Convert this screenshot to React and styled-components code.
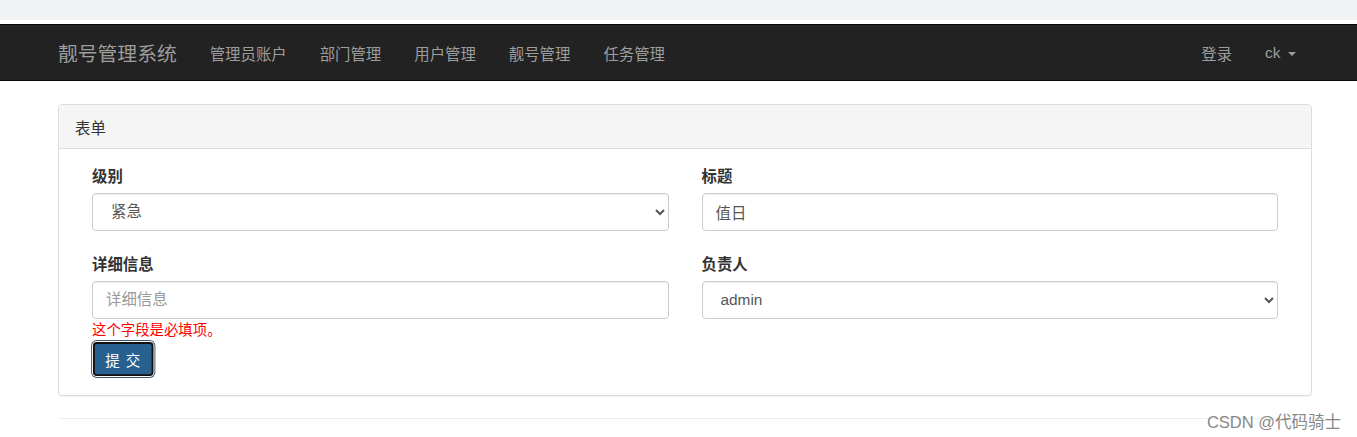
import React from 'react';
import styled, { createGlobalStyle } from 'styled-components';

const GlobalStyle = createGlobalStyle`
  body {
    margin: 0;
    padding: 0;
    font-family: "Liberation Sans", "Noto Sans CJK SC", sans-serif;
    font-size: 15.4px;
    color: #333;
    background: #fff;
  }
  * { box-sizing: border-box; }
`;

const TopStrip = styled.div`
  height: 20px;
  background: #f1f2f4;
  margin-bottom: 4px;
`;

const Navbar = styled.nav`
  height: 57px;
  background: #222;
  border-top: 1px solid #080808;
  border-bottom: 1px solid #080808;
`;

const Container = styled.div`
  padding: 0 45px 0 58px;
  height: 100%;
  display: flex;
  align-items: center;
`;

const Brand = styled.a`
  color: #9d9d9d;
  font-size: 19.8px;
  padding-right: 16.5px;
  text-decoration: none;
`;

const NavList = styled.div`
  display: flex;
  align-items: center;
  margin-left: ${p => (p.$right ? 'auto' : '0')};
`;

const NavItem = styled.a`
  color: #9d9d9d;
  font-size: 15.4px;
  padding: 0 16.5px;
  text-decoration: none;
  display: flex;
  align-items: center;
`;

const Caret = styled.span`
  display: inline-block;
  margin-left: 7px;
  border-top: 4.5px solid #9d9d9d;
  border-left: 4.5px solid transparent;
  border-right: 4.5px solid transparent;
  margin-top: 2px;
`;

const Main = styled.div`
  padding: 0 45px 0 58px;
  margin-top: 23px;
`;

const Panel = styled.div`
  border: 1px solid #ddd;
  border-radius: 4px;
  box-shadow: 0 1px 1px rgba(0, 0, 0, 0.05);
  margin-bottom: 22px;
`;

const PanelHeading = styled.div`
  background: #f5f5f5;
  border-bottom: 1px solid #ddd;
  border-radius: 3px 3px 0 0;
  height: 44px;
  padding: 0 16px;
  display: flex;
  align-items: center;
  font-size: 15.4px;
  color: #333;
`;

const PanelBody = styled.div`
  padding: 16.5px;
`;

const Row = styled.div`
  display: grid;
  grid-template-columns: 1fr 1fr;
`;

const Col = styled.div`
  padding: 0 16.5px;
`;

const FormGroup = styled.div`
  margin-bottom: ${p => (p.$last ? '0' : '23px')};
`;

const Label = styled.label`
  display: block;
  font-weight: bold;
  font-size: 15.4px;
  line-height: 22px;
  margin-bottom: 5.5px;
  color: #333;
`;

const controlStyles = `
  display: block;
  width: 100%;
  height: 37.5px;
  padding: 6.5px 13px;
  font-family: "Liberation Sans", "Noto Sans CJK SC", sans-serif;
  font-size: 15.4px;
  color: #555;
  background: #fff;
  border: 1px solid #ccc;
  border-radius: 4px;
  box-shadow: inset 0 1px 1px rgba(0, 0, 0, 0.075);
  outline: none;
`;

const Input = styled.input`
  ${controlStyles}
  &::placeholder { color: #999; }
`;

const Select = styled.select`
  ${controlStyles}
  padding: 6px 12px 6px 14px;
`;

const ErrorText = styled.div`
  color: #f00;
  font-size: 14.4px;
  line-height: 16px;
  margin-top: 3.5px;
`;

const SubmitButton = styled.button`
  margin-top: 4px;
  height: 36px;
  width: 64px;
  background: #286090;
  color: #fff;
  font-family: "Liberation Sans", "Noto Sans CJK SC", sans-serif;
  font-size: 15.4px;
  border: 2px solid #111;
  border-radius: 4px;
  box-shadow: 0 0 0 1px #fff, 0 0 0 2px #3b5570;
  padding: 0;
  letter-spacing: 1px;
  transform: scale(0.945);
  transform-origin: left top;
  margin-left: 1px;
`;

const Footer = styled.div`
  position: relative;
  padding-bottom: 20px;
`;

const Divider = styled.hr`
  margin: 0;
  border: 0;
  border-top: 1px solid #eee;
`;

const Watermark = styled.div`
  position: absolute;
  right: -29px;
  top: -9px;
  color: #888;
  font-size: 16.5px;
  white-space: nowrap;
`;

const App = () => {
  return (
    <>
      <GlobalStyle />
      <TopStrip />
      <Navbar>
        <Container>
          <Brand>靓号管理系统</Brand>
          <NavList>
            <NavItem>管理员账户</NavItem>
            <NavItem>部门管理</NavItem>
            <NavItem>用户管理</NavItem>
            <NavItem>靓号管理</NavItem>
            <NavItem>任务管理</NavItem>
          </NavList>
          <NavList $right>
            <NavItem>登录</NavItem>
            <NavItem>ck<Caret /></NavItem>
          </NavList>
        </Container>
      </Navbar>
      <Main>
        <Panel>
          <PanelHeading>表单</PanelHeading>
          <PanelBody>
            <Row>
              <Col>
                <FormGroup>
                  <Label>级别</Label>
                  <Select defaultValue="1">
                    <option value="1">紧急</option>
                    <option value="2">重要</option>
                    <option value="3">临时</option>
                  </Select>
                </FormGroup>
                <FormGroup $last>
                  <Label>详细信息</Label>
                  <Input placeholder="详细信息" />
                  <ErrorText>这个字段是必填项。</ErrorText>
                  <SubmitButton>提 交</SubmitButton>
                </FormGroup>
              </Col>
              <Col>
                <FormGroup>
                  <Label>标题</Label>
                  <Input defaultValue="值日" />
                </FormGroup>
                <FormGroup $last>
                  <Label>负责人</Label>
                  <Select defaultValue="admin">
                    <option value="admin">admin</option>
                  </Select>
                </FormGroup>
              </Col>
            </Row>
          </PanelBody>
        </Panel>
        <Footer>
          <Divider />
          <Watermark>CSDN @代码骑士</Watermark>
        </Footer>
      </Main>
    </>
  );
};

export default App;
